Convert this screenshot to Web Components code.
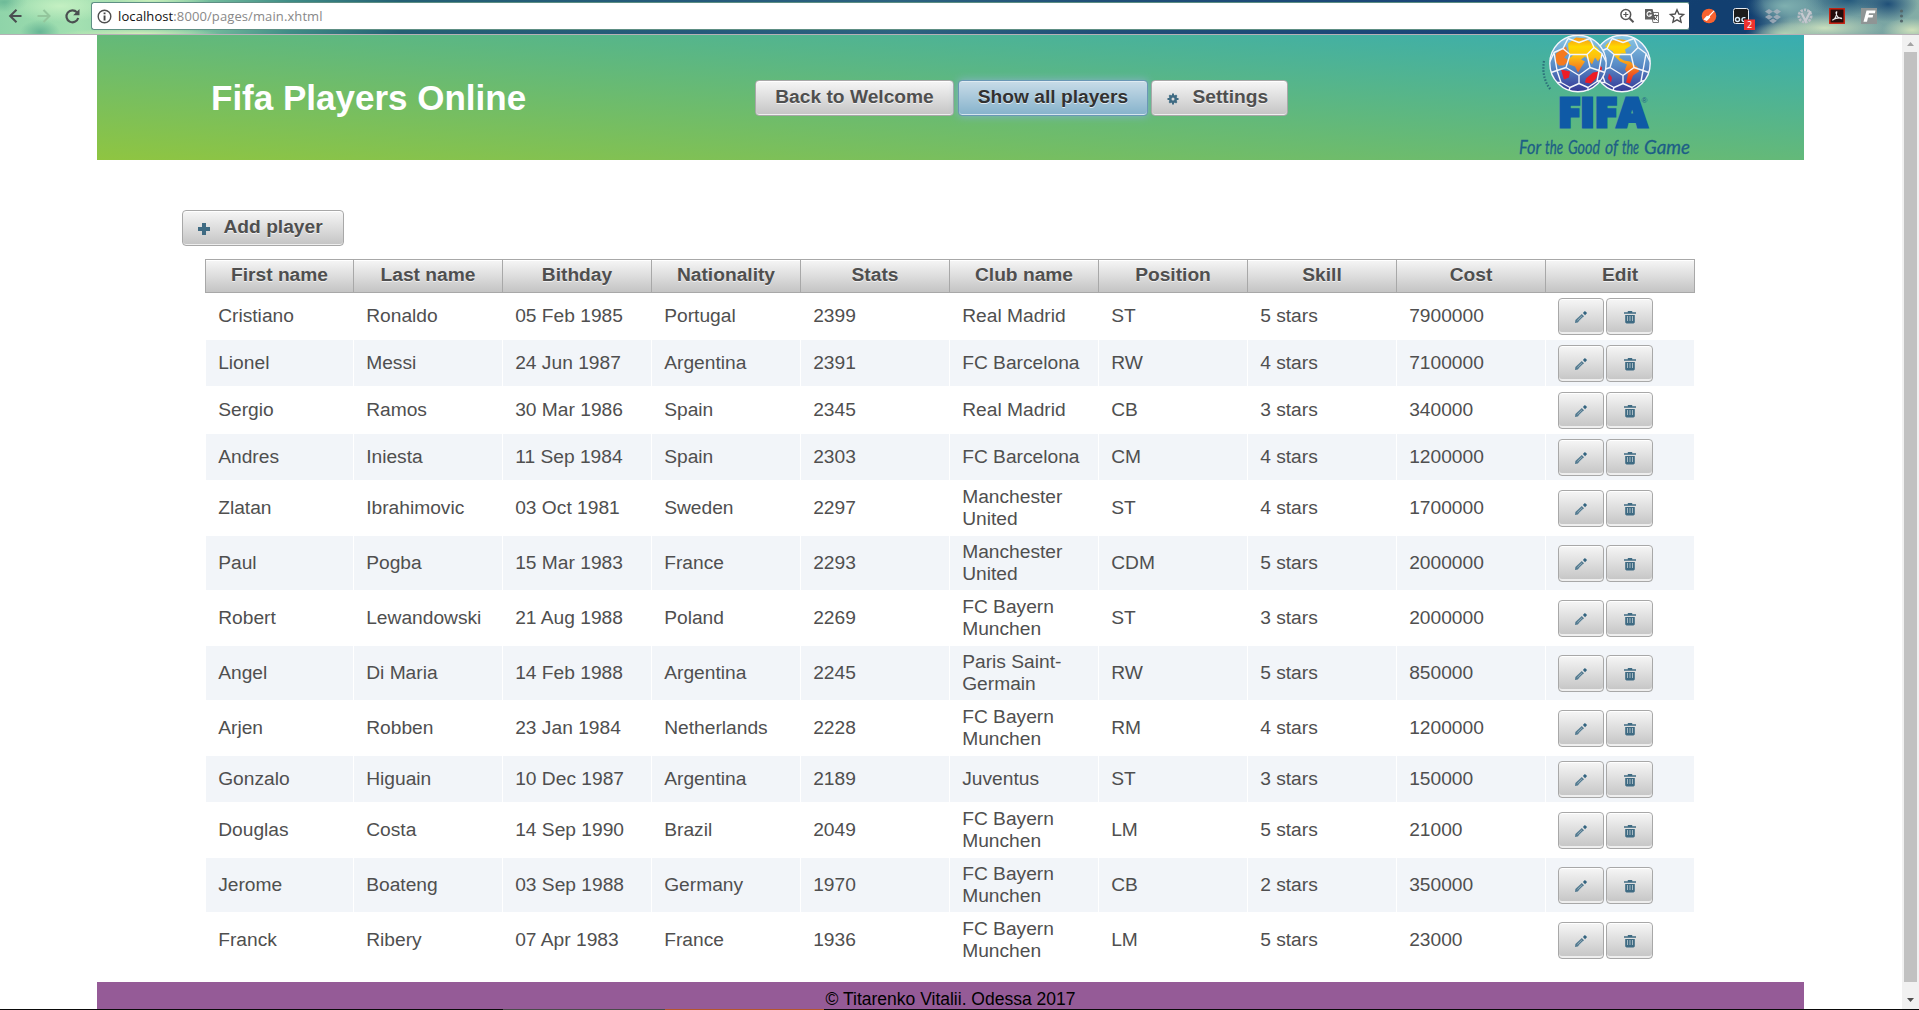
<!DOCTYPE html>
<html lang="en"><head><meta charset="utf-8"><title>Fifa Players Online</title>
<style>
html,body{margin:0;height:100%;overflow:hidden;background:#fff;font-family:"Liberation Sans",Arial,sans-serif}
</style></head><body>
<fifa-app></fifa-app>
<script>
const define=(name,html,after)=>customElements.define(name,class extends HTMLElement{
  constructor(){super();this.attachShadow({mode:'open'}).innerHTML=html;if(after)after(this)}
});

const ICONS={
 gear:'<svg width="14" height="14" viewBox="0 0 14 14"><g fill="#3f6b83"><circle cx="7" cy="7" r="4"/><path d="M6 1.500h2v11H6zM1.500 6h11v2h-11z"/><path d="M2.600 4l1.400-1.400 7.400 7.400-1.400 1.400zM10 2.600l1.400 1.400-7.400 7.400-1.400-1.400z"/></g><circle cx="7" cy="7" r="1.500" fill="#dadada"/></svg>',
 plus:'<svg width="14" height="14" viewBox="0 0 14 14"><path d="M5 1h4v4h4v4H9v4H5V9H1V5h4z" fill="#3f6b83"/></svg>',
 pencil:'<svg width="14" height="14" viewBox="0 0 14 14"><path d="M1 13l.4-3 6.400-6 2.200 2.200L3.800 12.400z" fill="#527a90"/><path d="M3.400 10.400l4.400-4.300M4.600 11.400l4.200-4.200" stroke="#b9c6cd" stroke-width=".7"/><path d="M8.900 3l2-2 2.200 2-2 2.200z" fill="#336480"/></svg>',
 trash:'<svg width="14" height="14" viewBox="0 0 14 14"><path d="M1 2.200h3.800V1h4.400v1.200H13v1.500H1zM2.200 4.900h9.600V12.500L10.500 13.600h-7L2.200 12.500z" fill="#3f6b83"/><path d="M4.500 6v5M7 6v5M9.500 6v5" stroke="#b4c3cb" stroke-width=".9"/></svg>'
};

/* Button: optional icon attribute, label in the slot */
define('ui-button',`<style>
:host{display:block;flex:none;height:36px;box-sizing:border-box}
button{all:unset;box-sizing:border-box;display:flex;align-items:center;justify-content:center;width:100%;height:100%;border:1px solid #a8a8a8;border-radius:4px;padding-bottom:2px;
 background:linear-gradient(#f6f6f6,#c4c4c4);box-shadow:inset 0 1px 0 #fff,inset 0 -1px 0 #eeeeee;font-weight:bold;font-size:19.2px;color:#4f4f4f;text-shadow:0 1px 0 rgba(255,255,255,.7);white-space:nowrap}
:host([active]) button{background:linear-gradient(#c9dce8,#85b2cb);border-color:#6a97b5;color:#313131;box-shadow:inset 0 1px 0 #dfebf2,inset 0 -1px 0 #d5e5ee,0 0 8px #85b2cb}
.i{display:none;margin-top:3px;height:14px}
:host([icon]) .i{display:block}
:host([bare]) .i{margin-top:2px}
:host([bare]) button{box-shadow:inset 0 1px 0 #fff,inset 0 -2px 0 #eeeeee;padding-bottom:1px}
:host([icon]:not([bare])) .i{margin-right:13px}
:host([icon]:not([bare])) button{justify-content:flex-start;padding-left:13.5px}
svg{display:block}
</style><button><span class="i"></span><slot></slot></button>`);
customElements.define('icon-button',class extends customElements.get('ui-button'){
 connectedCallback(){this.shadowRoot.querySelector('.i').innerHTML=ICONS[this.getAttribute('icon')]}
});

define('browser-bar',`<style>
:host{display:flex;height:35px;box-sizing:border-box;border-bottom:1px solid #b6b0b6;align-items:center;padding:0 6px 2px 8px;
background:
 radial-gradient(ellipse 55px 40px at 1712px 16px,#123f70 40%,#123f7000),
 radial-gradient(ellipse 40px 12px at 1785px 34px,#b4d2b4,#8bb9ad00),
 radial-gradient(ellipse 40px 16px at 1785px 6px,#7fb0b0,#8bb9ad00),
 radial-gradient(ellipse 60px 14px at 1825px 28px,#c9dfbd,#8bb9ad00),
 radial-gradient(ellipse 30px 18px at 1888px 4px,#1f4f78,#1f4f7800),
 radial-gradient(ellipse 44px 16px at 1848px 0px,#23587c,#2c618000),
 radial-gradient(ellipse 30px 12px at 1912px 30px,#cde0bb,#8bb9ad00),
 radial-gradient(ellipse 55px 16px at 60px 6px,#c4f0c2,#a8e3b400),
 radial-gradient(ellipse 20px 12px at 40px 32px,#67b595,#67b59500),
 radial-gradient(ellipse 24px 10px at 4px 2px,#6dba98,#67b59500),
 radial-gradient(ellipse 80px 6px at 140px 34px,#d3efb9,#a8d9b000),
 radial-gradient(ellipse 60px 8px at 150px 0px,#c9efba,#a8d9b000),
 linear-gradient(90deg,#8fd4a9 0,#a3e0b1 80px,#7fc6a2 190px,#3f8c86 290px,#246074 400px,#255a7b 700px,#2c6380 900px,#204f78 1100px,#1b4778 1400px,#123f70 1750px,#5f8f9b 1790px,#84ada6 1919px)}
nav{display:flex;width:83px;align-items:center;gap:12px;flex:none}
nav svg:first-child{transform:translateX(1px)}
.url{height:28px;flex:none;width:1599px;box-sizing:border-box;border:1px solid #5e8f84;border-right-color:#163a5c;border-radius:3px;background:#fff;display:flex;align-items:center;padding:0 4px 0 5px;font:13px "Open Sans",sans-serif;color:#888}
.url b{font-weight:normal;color:#111}
.t{margin-left:6px;flex:1;letter-spacing:.1px}
.r{display:flex;gap:9px}
.ext{display:flex;flex:1;align-items:center;margin-left:11px;gap:16px}
svg{display:block;overflow:visible;flex:none}
</style>
<nav>
<svg width="16" height="16" viewBox="0 0 16 16" fill="none" stroke="#4a4f50" stroke-width="2.100"><path d="M12.500 8H1.500M7.500 1.700L1.200 8l6.300 6.300"/></svg>
<svg width="16" height="16" viewBox="0 0 16 16" fill="none" stroke="#93c69c" stroke-width="2"><path d="M1.500 8h12M7.500 2l6 6-6 6"/></svg>
<svg width="16" height="16" viewBox="0 0 16 16"><path d="M13 4.400A6 6 0 1 0 14.200 10" fill="none" stroke="#4a4f50" stroke-width="2.200"/><path d="M15.500 1v6.300H9.200z" fill="#4a4f50"/></svg>
</nav>
<div class="url">
<svg width="15" height="15" viewBox="0 0 15 15"><circle cx="7.500" cy="7.500" r="6.300" fill="none" stroke="#4e4e4e" stroke-width="1.400"/><path d="M6.600 6.500h1.900v5H6.600zM6.600 3.500h1.900v1.800H6.600z" fill="#444"/></svg>
<span class="t"><b>localhost</b>:8000/pages/main.xhtml</span>
<span class="r">
<svg width="16" height="16" viewBox="0 0 16 16" fill="none" stroke="#555" stroke-width="1.500"><circle cx="6.800" cy="6.500" r="4.900"/><path d="M10.500 10.200l4 4" stroke-width="2"/><path d="M4.300 6.500h5M6.800 4v5" stroke-width="1.200"/></svg>
<svg width="16" height="16" viewBox="0 0 16 16"><path d="M7 4.500h7.500v10H9z" fill="#fff" stroke="#777"/><path d="M1 1h7.500l3 10.500H1z" fill="#606060"/><path d="M7.200 4.600a2.300 2.300 0 1 0 .2 2.400H5.300" fill="none" stroke="#fff" stroke-width="1.100"/><path d="M9.500 7.500h4.500M11.700 6.500v1M13 7.500c-.4 2-1.500 3.500-3 4.500M10.500 9.500l3 3" fill="none" stroke="#555"/></svg>
<svg width="16" height="16" viewBox="0 0 16 16"><path d="M8 1.700l1.900 4.300 4.700.5-3.500 3.100 1 4.600L8 11.800l-4.100 2.400 1-4.600L1.400 6.500l4.700-.5z" fill="none" stroke="#505050" stroke-width="1.400"/></svg>
</span></div>
<div class="ext">
<svg width="16" height="16" viewBox="0 0 16 16"><circle cx="8" cy="8" r="7.300" fill="#f9622f"/><path d="M12.800 2.500l.7.700-4.600 5 .3 1.200-3.400 3.600-3.400-1.500 3.400-3.800 1.400.2z" fill="#fff"/></svg>
<svg width="16" height="16" viewBox="0 0 16 16"><rect x=".5" y=".5" width="15" height="15" rx="2" fill="#1c1c1c" stroke="#e8ecf2"/><circle cx="4.500" cy="11.500" r="2" fill="none" stroke="#d9ecff" stroke-width="1.400"/><path d="M12.500 9.600h-1.500a2 2 0 0 0 0 4" fill="none" stroke="#d9ecff" stroke-width="1.400"/><rect x="11" y="11.500" width="11" height="10.500" fill="#f0322f"/><text x="16.500" y="20" font-size="9" fill="#fff" text-anchor="middle" font-family="Open Sans,sans-serif">2</text></svg>
<svg width="16" height="16" viewBox="0 0 16 16" fill="#b3b7c2" opacity=".75"><path d="M4 1l4 2.600-4 2.600L0 3.600zM12 1l4 2.600-4 2.600-4-2.600zM4 6.500l4 2.600-4 2.600L0 9.100zM12 6.500l4 2.600-4 2.600-4-2.600zM8 10.500l4 2.300L8 15.500l-4-2.700z"/></svg>
<svg width="16" height="16" viewBox="0 0 16 16"><circle cx="8" cy="8" r="6" fill="none" stroke="#b9bec6" stroke-width="3" stroke-dasharray="2.300 1"/><circle cx="8" cy="8" r="4.800" fill="#8eaaae"/><path d="M4.500 5l4 8 5-10" fill="none" stroke="#c6c9d0" stroke-width="2.200"/></svg>
<svg width="16" height="16" viewBox="0 0 16 16"><rect x=".8" y=".8" width="14.400" height="14.400" fill="#230c0b" stroke="#c8200f" stroke-width="1.500"/><path d="M3.500 12.300c2-.8 4-4.500 4.300-8.500 0 0-1.200-.3-.7 1.600.7 3 3 5 5.400 5.200 1.300-.8-4.500-1.400-8.300.9z" fill="none" stroke="#eee" stroke-width="1.100"/></svg>
<svg width="16" height="16" viewBox="0 0 16 16"><rect width="16" height="16" fill="#8f9595"/><path d="M5.500 2.500h9l-.6 2.700H8L7.600 7h4.600l-.6 2.500H7L6 13.800H2.500z" fill="#fff"/></svg>
<svg width="16" height="16" viewBox="0 0 16 16" fill="#56686b"><circle cx="8.500" cy="3" r="1.600"/><circle cx="8.500" cy="8" r="1.600"/><circle cx="8.500" cy="13" r="1.600"/></svg>
</div>`);

/* Wordmark with the twin-globe footballs */
const sphere='<circle r="28.500" fill="url(#a)"/>';
const net='<g fill="none" stroke="#f4f6fb" stroke-width="1.400" stroke-linejoin="round"><circle r="28.200"/><path d="M-8-9L9-9 12 4 1 12-12 4zM-8-9L-15-15-10-25M9-9L16-16 12-25M-15-15L-24-11-28-2M16-16L24-10 28-2M12 4L21 7 27 9M21 7L24-10M-12 4L-21 7-24-11M-21 7L-27 9M1 12L1 20-8 24-17 19-21 7M1 20L10 24 19 18 21 7M-8 24L-9 27M10 24L10 27M-10-25L1-21 12-25M-17 19L-21 19M19 18L22 17"/></g>';
define('fifa-logo',`<style>:host{display:block;width:176px;height:125px;overflow:hidden}svg{display:block}</style>
<svg width="176" height="125" viewBox="0 0 176 125"><defs>
<linearGradient id="a" x1="0" y1="0" x2="0" y2="1"><stop offset="0" stop-color="#8ccbe6"/><stop offset=".55" stop-color="#5688c4"/><stop offset="1" stop-color="#353595"/></linearGradient>
<linearGradient id="b" gradientUnits="userSpaceOnUse" x1="0" y1="-26" x2="0" y2="20"><stop offset="0" stop-color="#f7941e"/><stop offset=".2" stop-color="#ffd800"/><stop offset=".42" stop-color="#fdc010"/><stop offset=".65" stop-color="#f6821f"/><stop offset="1" stop-color="#ed1c24"/></linearGradient></defs>
<g transform="translate(105 28.500)">${sphere}<path d="M-17-17C-12-25 0-26 6-22L9-18 3-14 4-10-1-10-3-6 2-3 8-2 16 4 17 8 11 12 8 20 4 19 6 11 3 6 5 1-2-2-8-8-9-12z" fill="url(#b)"/><path d="M-13 10l3 4-1 5-3-4z" fill="#e0203a"/>${net}</g>
<g transform="translate(61 28.500)">${sphere}<path d="M-10-20L-2-26 8-25 20-15 24-8 20-2 17-6 14 1 10-4 7-7 3-4 7-2 3 4 0 9-3 3-9 1-9-5-5-8-9-10z" fill="url(#b)"/><path d="M-22-10L-12-17-10-10-14-6-9-3-14 2-19 2-23-2z" fill="#f47a20"/><path d="M-17 6l9 2-1 6-5 2zM8 15l7-6 6-1-3 7-5 5-6-1zM22 2l2 2-1 5-2-3z" fill="#ed1c24"/>${net}</g>
<path d="M27 26C25 38 28 48 34 55" fill="none" stroke="#2c6f79" stroke-width="2.200" stroke-dasharray="1.500 1.600"/>
<text x="41" y="92.300" font-family="Open Sans,Liberation Sans" font-weight="800" font-size="40" fill="#0f5aa6" stroke="#0f5aa6" stroke-width="3" textLength="89" lengthAdjust="spacingAndGlyphs">FIFA</text>
<text x="124.500" y="68" font-size="8" fill="#1c5d88" font-family="Liberation Sans">®</text>
<g font-family="Lato,sans-serif" font-style="italic" font-size="19" fill="#1d5f86" stroke="#1d5f86" stroke-width=".3" transform="translate(0 119)">
<text x="2" textLength="22" lengthAdjust="spacingAndGlyphs">For</text><text x="28" textLength="18" lengthAdjust="spacingAndGlyphs">the</text><text x="51" textLength="32" lengthAdjust="spacingAndGlyphs">Good</text><text x="88" textLength="13" lengthAdjust="spacingAndGlyphs">of</text><text x="105" textLength="17" lengthAdjust="spacingAndGlyphs">the</text><text x="127" textLength="46" lengthAdjust="spacingAndGlyphs">Game</text></g>
</svg>`);

define('app-header',`<style>
:host{display:flex;height:125px;align-items:flex-start;background:linear-gradient(to top right,#8fc541,#38adb1)}
h1{margin:43px 0 0 114px;width:544px;font-size:35px;line-height:40px;color:#fff;white-space:nowrap}
nav{display:flex;gap:4px;margin-top:45px;width:663px}
.n1{width:199px}.n2{width:190px}.n3{width:137px;margin-left:-1px}
fifa-logo{margin-left:99px}
h1,nav,fifa-logo{flex:none}
</style><h1>Fifa Players Online</h1>
<nav><ui-button class="n1">Back to Welcome</ui-button><ui-button class="n2" active>Show all players</ui-button><icon-button class="n3" icon="gear">Settings</icon-button></nav>
<fifa-logo></fifa-logo>`);

const COLS=['First name','Last name','Bithday','Nationality','Stats','Club name','Position','Skill','Cost','Edit'];
const ROWS=`Cristiano|Ronaldo|05 Feb 1985|Portugal|2399|Real Madrid|ST|5 stars|7900000
Lionel|Messi|24 Jun 1987|Argentina|2391|FC Barcelona|RW|4 stars|7100000
Sergio|Ramos|30 Mar 1986|Spain|2345|Real Madrid|CB|3 stars|340000
Andres|Iniesta|11 Sep 1984|Spain|2303|FC Barcelona|CM|4 stars|1200000
Zlatan|Ibrahimovic|03 Oct 1981|Sweden|2297|Manchester United|ST|4 stars|1700000
Paul|Pogba|15 Mar 1983|France|2293|Manchester United|CDM|5 stars|2000000
Robert|Lewandowski|21 Aug 1988|Poland|2269|FC Bayern Munchen|ST|3 stars|2000000
Angel|Di Maria|14 Feb 1988|Argentina|2245|Paris Saint-Germain|RW|5 stars|850000
Arjen|Robben|23 Jan 1984|Netherlands|2228|FC Bayern Munchen|RM|4 stars|1200000
Gonzalo|Higuain|10 Dec 1987|Argentina|2189|Juventus|ST|3 stars|150000
Douglas|Costa|14 Sep 1990|Brazil|2049|FC Bayern Munchen|LM|5 stars|21000
Jerome|Boateng|03 Sep 1988|Germany|1970|FC Bayern Munchen|CB|2 stars|350000
Franck|Ribery|07 Apr 1983|France|1936|FC Bayern Munchen|LM|5 stars|23000`.split('\n').map(r=>r.split('|'));

define('player-row',`<style>
:host{display:grid;grid-template-columns:148px repeat(9,149px);height:47px;box-sizing:border-box;padding:0 0 1px 1px}
:host([tall]){height:55px}
div{display:flex;align-items:center;padding:0 9px 0 12.2px;font-size:19.2px;line-height:22px;color:#4f4f4f;border-right:1px solid #fff}
div:last-child{gap:2px;padding:1px 0 0 12px}
:host([odd]) div{background:#f2f5f9}
.b{height:37px}.b1{width:46px}.b2{width:47px}
</style>`);
define('player-table',`<style>
:host{display:block;width:1490px}
header{display:grid;grid-template-columns:148px repeat(9,149px);height:34px;box-sizing:border-box;border:1px solid #a8a8a8;border-right:0;background:linear-gradient(#f6f6f6,#c4c4c4);box-shadow:inset 0 1px #fff}
header span{border-right:1px solid #a8a8a8;text-align:center;font-weight:bold;font-size:19.2px;line-height:30px;color:#4f4f4f;text-shadow:0 1px 0 rgba(255,255,255,.7)}
</style><header>${COLS.map(c=>`<span>${c}</span>`).join('')}</header><main></main>`,el=>{
 const m=el.shadowRoot.querySelector('main');
 ROWS.forEach((r,i)=>{
  const row=document.createElement('player-row');
  if(i%2)row.setAttribute('odd','');
  if(/Manchester|Bayern|Paris/.test(r[5]))row.setAttribute('tall','');
  row.shadowRoot.innerHTML+=r.map(c=>`<div>${c}</div>`).join('')+'<div><icon-button bare class="b b1" icon="pencil"></icon-button><icon-button bare class="b b2" icon="trash"></icon-button></div>';
  m.append(row);
 });
});

define('scroll-bar',`<style>
:host{display:flex;flex-direction:column;width:17px;background:#f1f1f1;align-items:center}
i{width:13px;height:930px;background:#c1c1c1}
svg{display:block}
</style><svg width="17" height="17"><path d="M5 11l3.500-4 3.500 4z" fill="#a3a3a3"/></svg><i></i><svg width="17" height="27"><path d="M5 16l3.500 4 3.500-4z" fill="#505050"/></svg>`);

define('fifa-app',`<style>
:host{display:flex;flex-direction:column;height:1010px;width:1919px;overflow:hidden}
browser-bar,.v,.edge{flex:none}
.v{display:flex;height:974px}
.p{display:flex;flex-direction:column;width:1707px;margin:0 98px 0 97px;flex:none}
.add{width:162px;margin:50px 0 13px 85px}
player-table{margin-left:108px}
footer{margin-top:14px;height:27px;background:#955b97;text-align:center;font-size:17.500px;line-height:19px;padding-top:8px;box-sizing:border-box;color:#000}
.edge{height:1px;background:linear-gradient(90deg,#0a0a0a 503px,#4a4a4a 503px 665px,#b5562d 665px 824px,#0a0a0a 824px)}
</style><browser-bar></browser-bar>
<div class="v"><div class="p"><app-header></app-header>
<icon-button class="add" icon="plus">Add player</icon-button>
<player-table></player-table>
<footer>© Titarenko Vitalii. Odessa 2017</footer></div>
<scroll-bar></scroll-bar></div><div class="edge"></div>`);
</script></body></html>
